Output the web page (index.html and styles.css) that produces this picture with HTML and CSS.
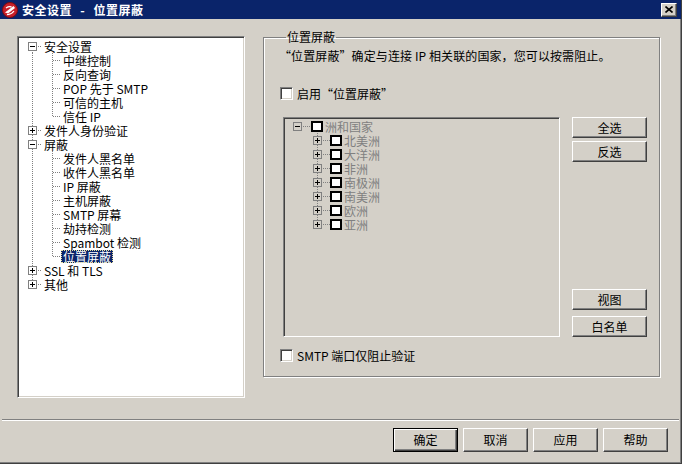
FILE: index.html
```html
<!DOCTYPE html>
<html lang="zh-CN">
  <head>
    <meta charset="UTF-8" />
    <title>安全设置 - 位置屏蔽</title>
    <link rel="stylesheet" href="styles.css">
  </head>

  <body>
    <div class="window">
      <div class="titlebar">
        <svg class="app-icon" width="16" height="16" viewBox="0 0 16 16">
          <circle cx="8" cy="8" r="7.5" fill="#c8202a" />
          <circle cx="8" cy="8" r="7.5" fill="none" stroke="#7a0c12" />
          <path d="M3 10.5 L11.5 4 L13 6 L6 11.5 Z" fill="#fff" />
          <path d="M4 6 Q7 4 9.5 5" stroke="#fff" stroke-width="1.4" fill="none" />
          <path d="M5 12.5 Q9 13 12 9" stroke="#fff" stroke-width="1.2" fill="none" />
        </svg>
        <span class="title">安全设置 - 位置屏蔽</span>
        <span class="close-btn">
          <svg width="8" height="7" viewBox="0 0 8 7">
            <path d="M0.5 0.5 L7.5 6.5 M7.5 0.5 L0.5 6.5" stroke="#000" stroke-width="1.6" />
          </svg>
        </span>
      </div>

      <div class="content">
        <!-- settings navigation -->
        <div class="nav sunken">
          <div class="row root first"><span class="exp"></span><span class="tick"></span><span class="label">安全设置</span></div>
          <div class="row child"><span class="label">中继控制</span></div>
          <div class="row child"><span class="label">反向查询</span></div>
          <div class="row child"><span class="label">POP 先于 SMTP</span></div>
          <div class="row child"><span class="label">可信的主机</span></div>
          <div class="row child last"><span class="label">信任 IP</span></div>
          <div class="row root"><span class="exp plus"></span><span class="tick"></span><span class="label">发件人身份验证</span></div>
          <div class="row root"><span class="exp"></span><span class="tick"></span><span class="label">屏蔽</span></div>
          <div class="row child"><span class="label">发件人黑名单</span></div>
          <div class="row child"><span class="label">收件人黑名单</span></div>
          <div class="row child"><span class="label">IP 屏蔽</span></div>
          <div class="row child"><span class="label">主机屏蔽</span></div>
          <div class="row child"><span class="label">SMTP 屏幕</span></div>
          <div class="row child"><span class="label">劫持检测</span></div>
          <div class="row child"><span class="label">Spambot 检测</span></div>
          <div class="row child last"><span class="label selected">位置屏蔽</span></div>
          <div class="row root"><span class="exp plus"></span><span class="tick"></span><span class="label">SSL 和 TLS</span></div>
          <div class="row root last"><span class="exp plus"></span><span class="tick"></span><span class="label">其他</span></div>
        </div>

        <fieldset class="group">
          <legend>位置屏蔽</legend>
          <p class="desc">“位置屏蔽”确定与连接 IP 相关联的国家，您可以按需阻止。</p>

          <label class="check"><span class="box"></span>启用“位置屏蔽”</label>

          <div class="regions">
            <div class="region-tree sunken">
              <div class="row top"><span class="exp"></span><span class="tick"></span><span class="state"></span><span class="label">洲和国家</span></div>
              <div class="row sub"><span class="exp plus"></span><span class="tick"></span><span class="state"></span><span class="label">北美洲</span></div>
              <div class="row sub"><span class="exp plus"></span><span class="tick"></span><span class="state"></span><span class="label">大洋洲</span></div>
              <div class="row sub"><span class="exp plus"></span><span class="tick"></span><span class="state"></span><span class="label">非洲</span></div>
              <div class="row sub"><span class="exp plus"></span><span class="tick"></span><span class="state"></span><span class="label">南极洲</span></div>
              <div class="row sub"><span class="exp plus"></span><span class="tick"></span><span class="state"></span><span class="label">南美洲</span></div>
              <div class="row sub"><span class="exp plus"></span><span class="tick"></span><span class="state"></span><span class="label">欧洲</span></div>
              <div class="row sub last"><span class="exp plus"></span><span class="tick"></span><span class="state"></span><span class="label">亚洲</span></div>
            </div>

            <div class="side-buttons">
              <div class="btn-stack">
                <button class="btn small">全选</button>
                <button class="btn small">反选</button>
              </div>
              <div class="btn-stack loose">
                <button class="btn small">视图</button>
                <button class="btn small">白名单</button>
              </div>
            </div>
          </div>

          <label class="check smtp"><span class="box"></span>SMTP 端口仅阻止验证</label>
        </fieldset>
      </div>

      <div class="separator"></div>

      <div class="actions">
        <button class="btn default">确定</button>
        <button class="btn">取消</button>
        <button class="btn">应用</button>
        <button class="btn">帮助</button>
      </div>
    </div>
  </body>
</html>
```

FILE: styles.css
```css
body {
  margin: 0;
  font-family: "Noto Sans CJK SC", "Liberation Sans", sans-serif;
  font-size: 12px;
  background-color: #d4d0c8;
  color: #000;
}

.window {
  width: 682px;
  height: 464px;
  box-sizing: border-box;
  display: flex;
  flex-direction: column;
  border-right: 1px solid #404040;
  border-bottom: 1px solid #404040;
  box-shadow: inset -1px -1px #808080;
  overflow: hidden;
}

/* Title bar */
.titlebar {
  height: 19px;
  flex: none;
  display: flex;
  align-items: center;
  background-color: #0a246a;
  color: white;
  padding: 0 4px 0 2px;
}

.app-icon {
  flex: none;
  margin-right: 4px;
}

.title {
  font-weight: bold;
  font-size: 12px;
  line-height: 16px;
  letter-spacing: 0.5px;
  word-spacing: 5px;
  flex: 1;
}

.close-btn {
  width: 16px;
  height: 14px;
  box-sizing: border-box;
  display: flex;
  align-items: center;
  justify-content: center;
  background-color: #d4d0c8;
  border: 1px solid;
  border-color: #fff #404040 #404040 #fff;
  box-shadow: inset -1px -1px #808080;
}

/* Main area */
.content {
  height: 400px;
  flex: none;
  display: flex;
  align-items: flex-start;
  padding: 11px 0 0 17px;
  box-sizing: border-box;
}

.sunken {
  box-sizing: border-box;
  border: 1px solid;
  border-color: #808080 #fff #fff #808080;
  box-shadow: inset 1px 1px #404040, inset -1px -1px #d4d0c8;
}

.row {
  height: 14px;
  line-height: 14px;
  display: flex;
  align-items: center;
  white-space: nowrap;
  background-repeat: no-repeat;
}

.label {
  padding: 0 2px;
  line-height: 13px;
  height: 13px;
}

/* Expand / collapse boxes */
.exp {
  flex: none;
  width: 9px;
  height: 9px;
  box-sizing: border-box;
  border: 1px solid #808080;
  background-color: #fff;
  display: grid;
  place-items: center;
}

.exp::before,
.exp::after {
  content: "";
  grid-area: 1 / 1;
  background-color: #000;
}

.exp::before {
  width: 5px;
  height: 1px;
}

.exp.plus::after {
  width: 1px;
  height: 5px;
}

.tick {
  flex: none;
  height: 1px;
  background-image: repeating-linear-gradient(to right, #808080 0 1px, transparent 1px 2px);
}

/* Navigation tree */
.nav {
  width: 228px;
  height: 362px;
  margin-top: 6px;
  background-color: #fff;
  padding: 2px 0 0 2px;
}

.nav .row.root {
  padding-left: 8px;
  background-image: repeating-linear-gradient(#808080 0 1px, transparent 1px 2px);
  background-size: 1px 14px;
  background-position: 12px 0;
}

.nav .row.root.first {
  background-size: 1px 7px;
  background-position: 12px 7px;
}

.nav .row.root.last {
  background-size: 1px 7px;
  background-position: 12px 0;
}

.nav .row.root .tick {
  width: 4px;
  margin-left: 1px;
}

.nav .row.child {
  padding-left: 41px;
  background-image:
    repeating-linear-gradient(#808080 0 1px, transparent 1px 2px),
    repeating-linear-gradient(#808080 0 1px, transparent 1px 2px),
    repeating-linear-gradient(to right, #808080 0 1px, transparent 1px 2px);
  background-size: 1px 14px, 1px 14px, 8px 1px;
  background-position: 12px 0, 32px 0, 33px 7px;
}

.nav .row.child.last {
  background-size: 1px 14px, 1px 8px, 8px 1px;
}

.nav .label.selected {
  background-color: #0a246a;
  color: white;
  outline: 1px dotted #e8e0a0;
  outline-offset: -1px;
}

/* Group box */
.group {
  width: 397px;
  height: 347px;
  box-sizing: border-box;
  margin: 0 0 0 18px;
  padding: 5px 0 0 16px;
  border: 1px solid #808080;
  box-shadow: inset 1px 1px #fff, 1px 1px #fff;
  min-width: 0;
}

.group legend {
  margin-left: 6px;
  padding: 0 1px;
  line-height: 14px;
}

.desc {
  margin: 0 0 0 -1px;
  line-height: 14px;
  letter-spacing: 0.1px;
}

.check {
  display: flex;
  align-items: center;
  height: 13px;
  margin-top: 24px;
  line-height: 13px;
}

.check.smtp {
  margin-top: 12px;
}

.box {
  width: 13px;
  height: 13px;
  box-sizing: border-box;
  margin-right: 4px;
  background-color: #fff;
  border: 1px solid;
  border-color: #808080 #fff #fff #808080;
  box-shadow: inset 1px 1px #404040, inset -1px -1px #d4d0c8;
}

.regions {
  display: flex;
  margin-top: 17px;
  margin-left: 3px;
  height: 220px;
}

/* Country tree (disabled) */
.region-tree {
  width: 277px;
  height: 220px;
  padding: 1px 0 0 2px;
  color: #808080;
}

.region-tree .row.top {
  padding-left: 7px;
}

.region-tree .row.top .tick {
  width: 7px;
  margin: 0 1px;
}

.region-tree .row.sub {
  padding-left: 27px;
  background-image: repeating-linear-gradient(#808080 0 1px, transparent 1px 2px);
  background-size: 1px 14px;
  background-position: 31px 0;
}

.region-tree .row.sub.last {
  background-size: 1px 3px;
}

.region-tree .row.sub .tick {
  width: 7px;
  margin-left: 1px;
}

.region-tree .exp {
  background-color: #d4d0c8;
}

.state {
  flex: none;
  width: 12px;
  height: 11px;
  box-sizing: border-box;
  border: 2px solid #000;
  background-color: #fff;
}

.side-buttons {
  margin-left: 12px;
  display: flex;
  flex-direction: column;
  justify-content: space-between;
}

.btn-stack {
  display: flex;
  flex-direction: column;
  gap: 3px;
}

.btn-stack.loose {
  gap: 6px;
}

/* Push buttons */
.btn {
  font-family: inherit;
  font-size: 12px;
  color: #000;
  background-color: #d4d0c8;
  border: 1px solid;
  border-color: #fff #404040 #404040 #fff;
  box-shadow: inset -1px -1px #808080;
  padding: 0;
  width: 65px;
  height: 24px;
  box-sizing: border-box;
  line-height: 20px;
}

.btn.small {
  width: 75px;
  height: 21px;
  line-height: 17px;
}

.btn.default {
  border: 1px solid #000;
  box-shadow: inset 1px 1px #fff, inset -1px -1px #404040, inset -2px -2px #808080;
}

.separator {
  flex: none;
  height: 1px;
  margin: 0 2px;
  background-color: #808080;
  border-bottom: 1px solid #fff;
}

.actions {
  display: flex;
  justify-content: flex-end;
  gap: 5px;
  padding: 7px 13px 0 0;
}
```
